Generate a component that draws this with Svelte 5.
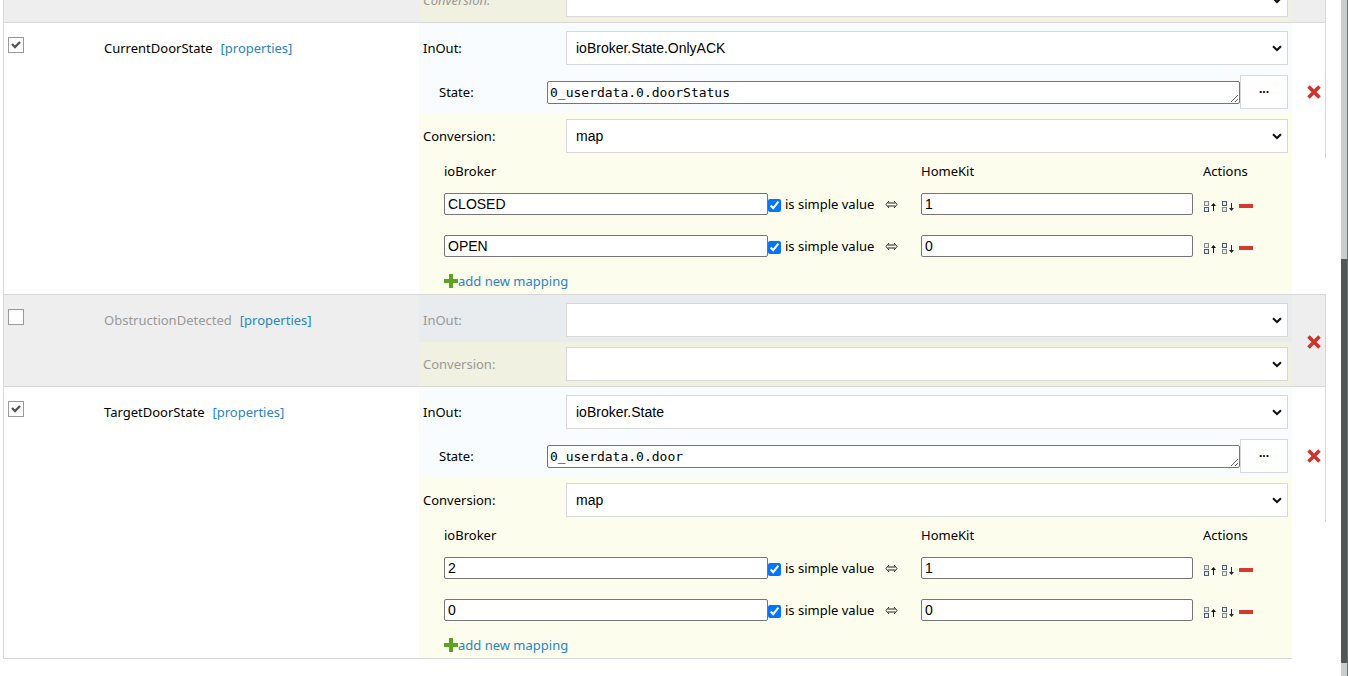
<script>
  let rows = $state([
    { name: '', enabled: false, partial: true, conversion: '' },
    {
      name: 'CurrentDoorState',
      enabled: true,
      inout: 'ioBroker.State.OnlyACK',
      state: '0_userdata.0.doorStatus',
      conversion: 'map',
      mappings: [
        { from: 'CLOSED', simple: true, to: '1' },
        { from: 'OPEN', simple: true, to: '0' }
      ]
    },
    { name: 'ObstructionDetected', enabled: false, inout: '', conversion: '' },
    {
      name: 'TargetDoorState',
      enabled: true,
      inout: 'ioBroker.State',
      state: '0_userdata.0.door',
      conversion: 'map',
      mappings: [
        { from: '2', simple: true, to: '1' },
        { from: '0', simple: true, to: '0' }
      ]
    }
  ]);

  const inouts = ['', 'ioBroker.State', 'ioBroker.State.OnlyACK'];
  const conversions = ['', 'map'];
</script>

{#snippet moveIcon(down)}
  <svg width="14" height="14" viewBox="0 0 14 14" aria-hidden="true">
    <g fill="#e3eef0" stroke-width="1">
      <rect x="1.5" y="2.5" width="4" height="4" stroke={down ? '#4a5b70' : '#85898b'} />
      <rect x="1.5" y="8.5" width="4" height="4" stroke={down ? '#85898b' : '#4a5b70'} />
    </g>
    {#if down}
      <path d="M10 4h1v5h2l-2.5 3L8 9h2z" fill="#1c2838" />
    {:else}
      <path d="M10 12h1V7h2l-2.5-3L8 7h2z" fill="#111" />
    {/if}
  </svg>
{/snippet}

<div class="page">
  <main>
    {#each rows as row, i}
      <section class="row" class:disabled={!row.enabled}>
        <div class="enable">
          {#if !row.partial}
            <input type="checkbox" class="tick" aria-label={row.name} bind:checked={row.enabled} />
          {/if}
        </div>
        <div class="name">
          {#if row.name}
            <span>{row.name}</span>
            <a href="#properties">[properties]</a>
          {/if}
        </div>
        <div class="config">
          {#if !row.partial}
            <div class="inout">
              <div class="field">
                <label for="inout-{i}">InOut:</label>
                <select id="inout-{i}" bind:value={row.inout}>
                  {#each inouts as option}<option value={option}>{option}</option>{/each}
                </select>
              </div>
              {#if row.state}
                <div class="field state">
                  <label for="state-{i}">State:</label>
                  <textarea id="state-{i}" rows="1" spellcheck="false" bind:value={row.state}></textarea>
                  <button type="button" class="browse">...</button>
                </div>
              {/if}
            </div>
          {/if}
          <div class="conversion">
            <div class="field">
              <label for="conv-{i}" class:italic={row.partial}>Conversion:</label>
              <select id="conv-{i}" bind:value={row.conversion}>
                {#each conversions as option}<option value={option}>{option}</option>{/each}
              </select>
            </div>
          </div>
        </div>
        <div class="remove">
          {#if !row.partial}
            <button type="button" class="icon" aria-label="Remove">
              <svg width="14" height="14" viewBox="0 0 14 14" aria-hidden="true">
                <path d="M1.5 1.5l11 11M12.5 1.5l-11 11" stroke="#d0342c" stroke-width="3.6" />
              </svg>
            </button>
          {/if}
        </div>
        {#if row.mappings}
          <div class="mapping">
            <table>
              <colgroup><col /><col class="c-to" /><col class="c-actions" /></colgroup>
              <thead>
                <tr><th>ioBroker</th><th>HomeKit</th><th>Actions</th></tr>
              </thead>
              <tbody>
                {#each row.mappings as m}
                  <tr>
                    <td>
                      <div class="from">
                        <input type="text" aria-label="ioBroker" bind:value={m.from} />
                        <label><input type="checkbox" bind:checked={m.simple} />is simple value</label>
                        <svg class="both" width="13" height="9" viewBox="0 0 13 9" role="img" aria-label="maps to">
                          <path d="M3 3h7M3 6h7M4 1L1 4.5 4 8M9 1l3 3.5L9 8" fill="none" stroke="#222" />
                        </svg>
                      </div>
                    </td>
                    <td><input type="text" aria-label="HomeKit" bind:value={m.to} /></td>
                    <td>
                      <div class="actions">
                        <button type="button" class="icon" aria-label="Move up">{@render moveIcon(false)}</button>
                        <button type="button" class="icon" aria-label="Move down">{@render moveIcon(true)}</button>
                        <button type="button" class="icon" aria-label="Delete">
                          <svg width="14" height="4" viewBox="0 0 14 4" aria-hidden="true">
                            <path d="M0 0h14v4H0z" fill="#d6392f" />
                          </svg>
                        </button>
                      </div>
                    </td>
                  </tr>
                {/each}
              </tbody>
            </table>
            <a class="add" href="#add">
              <svg width="14" height="14" viewBox="0 0 14 14" aria-hidden="true">
                <path d="M5 0h4v5h5v4H9v5H5V9H0V5h5z" fill="#5da423" />
              </svg>add new mapping</a>
          </div>
        {/if}
      </section>
    {/each}
  </main>
  <div class="track"><div class="thumb"></div></div>
</div>

<style>
  :global(body) {
    margin: 0;
    background: #fff;
  }
  .page {
    display: grid;
    grid-template-columns: minmax(0, 1fr) 7px;
    height: 100vh;
    overflow: hidden;
    font: 13px/20px 'Noto Sans', 'Open Sans', sans-serif;
    color: #000;
  }
  main {
    margin: -23px 15px 0 3px;
  }
  .row {
    display: grid;
    grid-template-columns: 100px minmax(0, 315fr) minmax(0, 873fr) 34px;
    border-top: 1px solid #d8d8d8;
    border-left: 1px solid #d8d8d8;
  }
  .enable {
    grid-area: 1 / 1 / span 2;
    padding: 14px 4px 0;
  }
  .name {
    grid-area: 1 / 2 / span 2;
    display: flex;
    align-items: flex-start;
    gap: 8px;
    padding-top: 15px;
  }
  .config {
    grid-area: 1 / 3;
  }
  .remove {
    grid-area: 1 / 4;
    display: flex;
    align-items: center;
    justify-content: flex-end;
    padding: 2px 4px 0 0;
    border-right: 1px solid #d8d8d8;
  }
  .mapping {
    grid-area: 2 / 3;
    padding-left: 25px;
  }
  .row:last-child > .enable,
  .row:last-child > .name,
  .row:last-child > .mapping {
    border-bottom: 1px solid #d8d8d8;
  }
  a {
    color: #2a84c6;
    text-decoration: none;
  }
  .inout {
    padding-top: 3px;
    background: #f8fcff;
  }
  .conversion,
  .mapping {
    background: #fcfdec;
  }
  .disabled {
    background: #eee;
    color: #999;
  }
  .disabled .inout {
    background: #e8ecef;
  }
  .disabled .conversion {
    background: #f0f1e0;
  }
  .field {
    display: flex;
    align-items: center;
    padding: 5px 4px;
  }
  .field > label {
    flex: 0 0 143px;
  }
  .field.state > label {
    flex-basis: 108px;
    padding-left: 16px;
  }
  .italic {
    font-style: italic;
  }
  select,
  .browse {
    box-sizing: border-box;
    height: 34px;
    border: 1px solid #d8d8d8;
    border-radius: 0;
    background-color: #fff;
    color: #000;
  }
  select {
    flex: 1;
    min-width: 0;
    padding: 0 5px;
    font: 14px 'Liberation Sans', Arial, sans-serif;
    appearance: none;
    background: #fff
      url("data:image/svg+xml,%3Csvg xmlns='http://www.w3.org/2000/svg' width='10' height='7' viewBox='0 0 10 7'%3E%3Cpath d='M1 1.2l4 3.8 4-3.8' fill='none' stroke='%23111' stroke-width='2'/%3E%3C/svg%3E")
      no-repeat right 5px center;
    padding: 0 20px 0 9px;
  }
  textarea {
    box-sizing: border-box;
    flex: 1;
    min-width: 0;
    height: 23px;
    padding: 2px;
    border: 1px solid #767676;
    border-radius: 2px;
    font: 13px/17px 'DejaVu Sans Mono', monospace;
    overflow: hidden;
    resize: both;
  }
  .browse {
    width: 48px;
    padding: 0 0 6px;
    font: bold 12px/20px 'Noto Sans', sans-serif;
  }
  .icon {
    display: flex;
    padding: 0;
    border: 0;
    background: none;
  }
  .tick {
    display: block;
    box-sizing: border-box;
    width: 16px;
    height: 16px;
    margin: 0;
    appearance: none;
    border: 1px solid #999;
    background: #fff;
  }
  .tick:checked {
    background: #fff
      url("data:image/svg+xml,%3Csvg xmlns='http://www.w3.org/2000/svg' viewBox='0 0 14 14'%3E%3Cpath d='M3 6l3 3 5-5' fill='none' stroke='%23555' stroke-width='2.4'/%3E%3C/svg%3E");
  }
  .mapping table {
    width: 100%;
    table-layout: fixed;
    border-collapse: collapse;
  }
  .c-to {
    width: 282px;
  }
  .c-actions {
    width: 89px;
  }
  th {
    height: 25px;
    padding: 0;
    font-weight: normal;
    text-align: left;
  }
  td {
    height: 42px;
    padding: 0;
  }
  .mapping input[type='text'] {
    box-sizing: border-box;
    width: calc(100% - 10px);
    height: 22px;
    padding: 1px 3px;
    border: 1px solid #767676;
    border-radius: 2px;
    font: 14px 'Liberation Sans', Arial, sans-serif;
  }
  .from {
    display: flex;
    align-items: center;
  }
  .from input[type='text'] {
    flex: 1;
    min-width: 0;
  }
  .from label {
    display: flex;
    align-items: center;
    gap: 4px;
    width: 117px;
    white-space: nowrap;
  }
  .from label input {
    width: 13px;
    height: 13px;
    margin: 3px 0 0;
  }
  .both {
    margin-right: 23px;
  }
  .actions {
    display: flex;
    align-items: center;
    gap: 4px;
    padding-top: 3px;
  }
  .add {
    display: flex;
    align-items: center;
    height: 27px;
  }
  .track {
    display: grid;
    grid-template-rows: 259fr 404fr 13fr;
    border-right: 1px solid #2a84b8;
    background: #ccc;
  }
  .thumb {
    grid-row: 2;
    background: #555;
  }
</style>
